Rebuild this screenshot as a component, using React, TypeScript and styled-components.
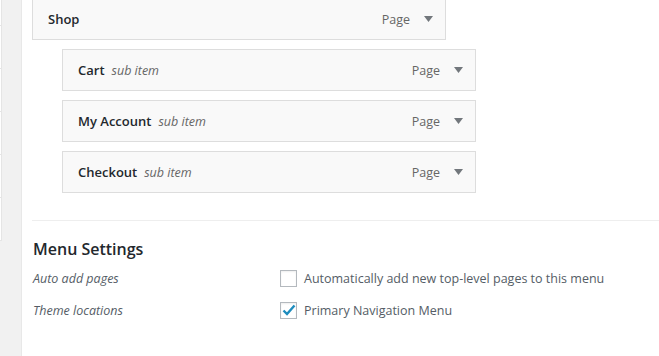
import React from 'react';
import styled, { createGlobalStyle } from 'styled-components';

const GlobalStyle = createGlobalStyle`
  html, body {
    margin: 0;
    padding: 0;
    background: #ffffff;
    overflow: hidden;
  }
  body {
    font-family: 'Open Sans', 'Noto Sans', sans-serif;
    font-size: 12.5px;
    color: #23282d;
  }
`;

type MenuItem = {
  title: string;
  sub?: boolean;
};

const items: MenuItem[] = [
  { title: 'Shop' },
  { title: 'Cart', sub: true },
  { title: 'My Account', sub: true },
  { title: 'Checkout', sub: true },
];

const Arrow = () => (
  <svg width="9" height="6" viewBox="0 0 9 6" aria-hidden="true">
    <path d="M0 0 L9 0 L4.5 6 Z" fill="#72777c" />
  </svg>
);

const App = () => (
  <>
    <GlobalStyle />
    <Page>
      <Sidebar>
        <SidePanel>
          {[0, 1, 2, 3, 4].map((i) => (
            <SideRow key={i} />
          ))}
        </SidePanel>
      </Sidebar>
      <Main>
        <MenuList>
          {items.map((item) => (
            <ItemBar key={item.title} $sub={item.sub}>
              <ItemTitle>
                {item.title}
                {item.sub && <SubLabel>sub item</SubLabel>}
              </ItemTitle>
              <ItemControls>
                <ItemType>Page</ItemType>
                <Arrow />
              </ItemControls>
            </ItemBar>
          ))}
        </MenuList>
        <Settings>
          <SettingsTitle>Menu Settings</SettingsTitle>
          <SettingRow>
            <SettingLabel>Auto add pages</SettingLabel>
            <CheckLabel>
              <Check />
              Automatically add new top-level pages to this menu
            </CheckLabel>
          </SettingRow>
          <SettingRow>
            <SettingLabel>Theme locations</SettingLabel>
            <CheckLabel>
              <Check $checked>
                <svg width="14" height="12" viewBox="0 0 14 12" aria-hidden="true">
                  <path
                    d="M1.5 6.5 L5 10 L12.5 1.5"
                    fill="none"
                    stroke="#1e8cbe"
                    strokeWidth="2.4"
                  />
                </svg>
              </Check>
              Primary Navigation Menu
            </CheckLabel>
          </SettingRow>
        </Settings>
      </Main>
    </Page>
  </>
);

export default App;

const Page = styled.div`
  display: flex;
  height: 356px;
  background: #f1f1f1;
`;

const Sidebar = styled.div`
  flex: 0 0 21px;
  background: #f1f1f1;
  border-right: 1px solid #e8e8e8;
`;

const SidePanel = styled.div`
  width: 1px;
  background: #ffffff;
  border-right: 1px solid #e5e5e5;
  border-bottom: 1px solid #e5e5e5;
  padding-top: 25px;
`;

const SideRow = styled.div`
  height: 42px;
  border-top: 1px solid #e5e5e5;
`;

const Main = styled.div`
  flex: 1;
  background: #ffffff;
  padding-left: 10px;
`;

const MenuList = styled.div`
  display: flex;
  flex-direction: column;
  gap: 9px;
  margin-top: -2px;
  padding-bottom: 27px;
  border-bottom: 1px solid #eeeeee;
`;

const ItemBar = styled.div<{ $sub?: boolean }>`
  box-sizing: border-box;
  display: flex;
  align-items: center;
  justify-content: space-between;
  width: 414px;
  height: 42px;
  margin-left: ${({ $sub }) => ($sub ? '30px' : '0')};
  padding: 0 12px 0 15px;
  background: #f9f9f9;
  border: 1px solid #dddddd;
`;

const ItemTitle = styled.span`
  font-size: 13px;
  font-weight: 600;
  color: #23282d;
`;

const SubLabel = styled.span`
  margin-left: 7px;
  font-size: 12.5px;
  font-weight: 400;
  font-style: italic;
  color: #666666;
`;

const ItemControls = styled.span`
  display: flex;
  align-items: center;
  gap: 14px;
`;

const ItemType = styled.span`
  color: #666666;
`;

const Settings = styled.div`
  padding-top: 17px;
`;

const SettingsTitle = styled.h3`
  margin: 0 0 2px 1px;
  font-size: 16px;
  font-weight: 600;
  line-height: 22px;
  color: #23282d;
`;

const SettingRow = styled.div`
  display: flex;
  align-items: center;
  height: 32px;
`;

const SettingLabel = styled.span`
  flex: 0 0 247px;
  padding-left: 1px;
  font-style: italic;
  color: #555d66;
`;

const CheckLabel = styled.label`
  display: flex;
  align-items: center;
  gap: 7px;
  color: #555d66;
`;

const Check = styled.span<{ $checked?: boolean }>`
  box-sizing: border-box;
  display: flex;
  align-items: center;
  justify-content: center;
  width: 17px;
  height: 17px;
  background: #ffffff;
  border: 1px solid #b4b9be;
  box-shadow: inset 0 1px 2px rgba(0, 0, 0, 0.07);
`;
